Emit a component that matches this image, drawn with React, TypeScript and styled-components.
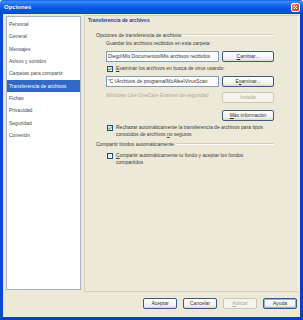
import React from 'react'
import styled, { createGlobalStyle } from 'styled-components'

const Global = createGlobalStyle`
  html, body { margin: 0; padding: 0; background: #fff; }
  * { box-sizing: border-box; }
`

const Window = styled.div`
  width: 303px;
  height: 320px;
  display: flex;
  flex-direction: column;
  font-family: "Liberation Sans", Arial, sans-serif;
  font-size: 5px;
  color: #3a3a3a;
`

const TitleBar = styled.div`
  height: 14px;
  flex: none;
  display: flex;
  align-items: center;
  justify-content: space-between;
  padding: 0 3px 0 4px;
  background: linear-gradient(to bottom, #0a5fe8 0%, #3d8dfa 12%, #1f6ff0 30%, #0556e3 60%, #0450d8 90%, #0342c4 100%);
  border-radius: 3px 3px 0 0;
`

const Title = styled.span`
  color: #fff;
  font-weight: bold;
  font-size: 6px;
  text-shadow: 1px 0 0 rgba(0, 0, 0, 0.25);
`

const CloseBtn = styled.div`
  width: 9px;
  height: 9px;
  border: 1px solid #fff;
  border-radius: 2px;
  background: linear-gradient(135deg, #f49a78, #e0562a 55%, #c8401a);
  display: flex;
  align-items: center;
  justify-content: center;
`

const Frame = styled.div`
  flex: 1;
  display: flex;
  flex-direction: column;
  background: #ece9d8;
  border-left: 3px solid #0a48d8;
  border-right: 3px solid #0a3cc8;
  border-bottom: 3px solid #0a3cc8;
  padding: 1px 1px 0 3px;
`

const Content = styled.div`
  display: flex;
  gap: 3px;
  height: 277px;
`

const List = styled.div`
  width: 75px;
  margin-top: 1px;
  height: 274px;
  background: #fff;
  border: 1px solid #a7b4c0;
  padding-top: 1px;
  display: flex;
  flex-direction: column;
`

const Item = styled.div<{ $active?: boolean }>`
  height: 12.33px;
  display: flex;
  align-items: center;
  padding-left: 2px;
  background: ${p => (p.$active ? '#3169c6' : 'transparent')};
  color: ${p => (p.$active ? '#fff' : '#4a4a4a')};
`

const Panel = styled.div`
  flex: 1;
  border: 1px solid #d4d0c0;
  border-right-color: #f8f7f2;
  display: flex;
  flex-direction: column;
  padding-left: 3px;
`

const Header = styled.div`
  height: 8px;
  display: flex;
  align-items: center;
  font-weight: bold;
  color: #1e3f8c;
`

const Section = styled.div`
  display: flex;
  flex-direction: column;
  margin-left: 8px;
  width: 178px;
`

const GroupTitle = styled.div<{ $mt: number }>`
  height: 7px;
  margin-top: ${p => p.$mt}px;
  display: flex;
  align-items: center;
  gap: 2px;
  white-space: nowrap;
  &::after {
    content: '';
    flex: 1;
    height: 0;
    border-top: 1px solid #d2cfbf;
    border-bottom: 1px solid #fff;
  }
`

const Indent = styled.div<{ $mt: number }>`
  margin-left: 10px;
  margin-top: ${p => p.$mt}px;
  display: flex;
  align-items: flex-start;
  gap: 3px;
  line-height: 7px;
  white-space: nowrap;
`

const Field = styled.div`
  width: 113px;
  height: 11px;
  border: 1px solid #7f9db9;
  background: #fff;
  display: flex;
  align-items: center;
  padding-left: 1px;
  overflow: hidden;
  white-space: nowrap;
  color: #333;
`

const Muted = styled.div`
  width: 113px;
  color: #aca899;
`

const Button = styled.div<{ $w?: number; $disabled?: boolean; $default?: boolean }>`
  width: ${p => p.$w ?? 52}px;
  height: 11px;
  flex: none;
  border: 1px solid ${p => (p.$disabled ? '#c9c7ba' : '#3d5a80')};
  border-radius: 2px;
  background: ${p => (p.$disabled ? '#f5f4ea' : 'linear-gradient(to bottom, #ffffff, #f3f2ec 70%, #dcd9cd)')};
  box-shadow: ${p => (p.$default ? 'inset 0 0 0 1px #8cb0f8' : 'none')};
  color: ${p => (p.$disabled ? '#aca899' : '#333')};
  display: flex;
  align-items: center;
  justify-content: center;
  line-height: 1;
`

const Spacer = styled.div`
  width: 113px;
`

const Check = styled.div`
  width: 6px;
  height: 6px;
  flex: none;
  margin-top: 1px;
  margin-left: 1px;
  border: 1px solid #1c5180;
  background: linear-gradient(135deg, #dcdcd6, #fff);
  display: flex;
  align-items: center;
  justify-content: center;
`

const Lines = styled.div`
  display: flex;
  flex-direction: column;
`

const Footer = styled.div`
  display: flex;
  justify-content: flex-end;
  gap: 6px;
  padding: 6px 2px 0 0;
`

const Tick = () => (
  <svg width="4" height="4" viewBox="0 0 8 8">
    <path d="M1 4 L3 6.5 L7 1.5" fill="none" stroke="#21a121" strokeWidth="2" />
  </svg>
)

const items = [
  'Personal',
  'General',
  'Mensajes',
  'Avisos y sonidos',
  'Carpetas para compartir',
  'Transferencia de archivos',
  'Fichas',
  'Privacidad',
  'Seguridad',
  'Conexión',
]

const App = () => {
  return (
    <Window>
      <Global />
      <TitleBar>
        <Title>Opciones</Title>
        <CloseBtn>
          <svg width="5" height="5" viewBox="0 0 10 10">
            <path d="M2 2 L8 8 M8 2 L2 8" stroke="#fff" strokeWidth="2" />
          </svg>
        </CloseBtn>
      </TitleBar>
      <Frame>
        <Content>
          <List>
            {items.map(t => (
              <Item key={t} $active={t === 'Transferencia de archivos'}>{t}</Item>
            ))}
          </List>
          <Panel>
            <Header>Transferencia de archivos</Header>
            <Section>
              <GroupTitle $mt={7}>Opciones de transferencia de archivos</GroupTitle>
              <Indent $mt={2}>Guardar los archivos recibidos en esta carpeta:</Indent>
              <Indent $mt={4}>
                <Field>Diego\Mis Documentos\Mis archivos recibidos</Field>
                <Button><u>C</u>ambiar...</Button>
              </Indent>
              <Indent $mt={3}>
                <Check><Tick /></Check>
                <span><u>E</u>xaminar los archivos en busca de virus usando:</span>
              </Indent>
              <Indent $mt={4}>
                <Field>"C:\Archivos de programa\McAfee\VirusScan</Field>
                <Button>E<u>x</u>aminar...</Button>
              </Indent>
              <Indent $mt={5}>
                <Muted>Windows Live OneCare Examen de seguridad</Muted>
                <Button $disabled>Instalar</Button>
              </Indent>
              <Indent $mt={7}>
                <Spacer />
                <Button><u>M</u>ás información</Button>
              </Indent>
              <Indent $mt={3}>
                <Check><Tick /></Check>
                <Lines>
                  <span>Rechazar automáticamente la transferencia de archivos para tipos</span>
                  <span>conocidos de archivos <u>n</u>o seguros</span>
                </Lines>
              </Indent>
              <GroupTitle $mt={2}>Compartir fondos automáticamente</GroupTitle>
              <Indent $mt={5}>
                <Check />
                <Lines>
                  <span><u>C</u>ompartir automáticamente tu fondo y aceptar los fondos</span>
                  <span>compartidos</span>
                </Lines>
              </Indent>
            </Section>
          </Panel>
        </Content>
        <Footer>
          <Button $w={34}>Aceptar</Button>
          <Button $w={34}>Cancelar</Button>
          <Button $w={34} $disabled><u>A</u>plicar</Button>
          <Button $w={34} $default>Ayuda</Button>
        </Footer>
      </Frame>
    </Window>
  )
}

export default App
